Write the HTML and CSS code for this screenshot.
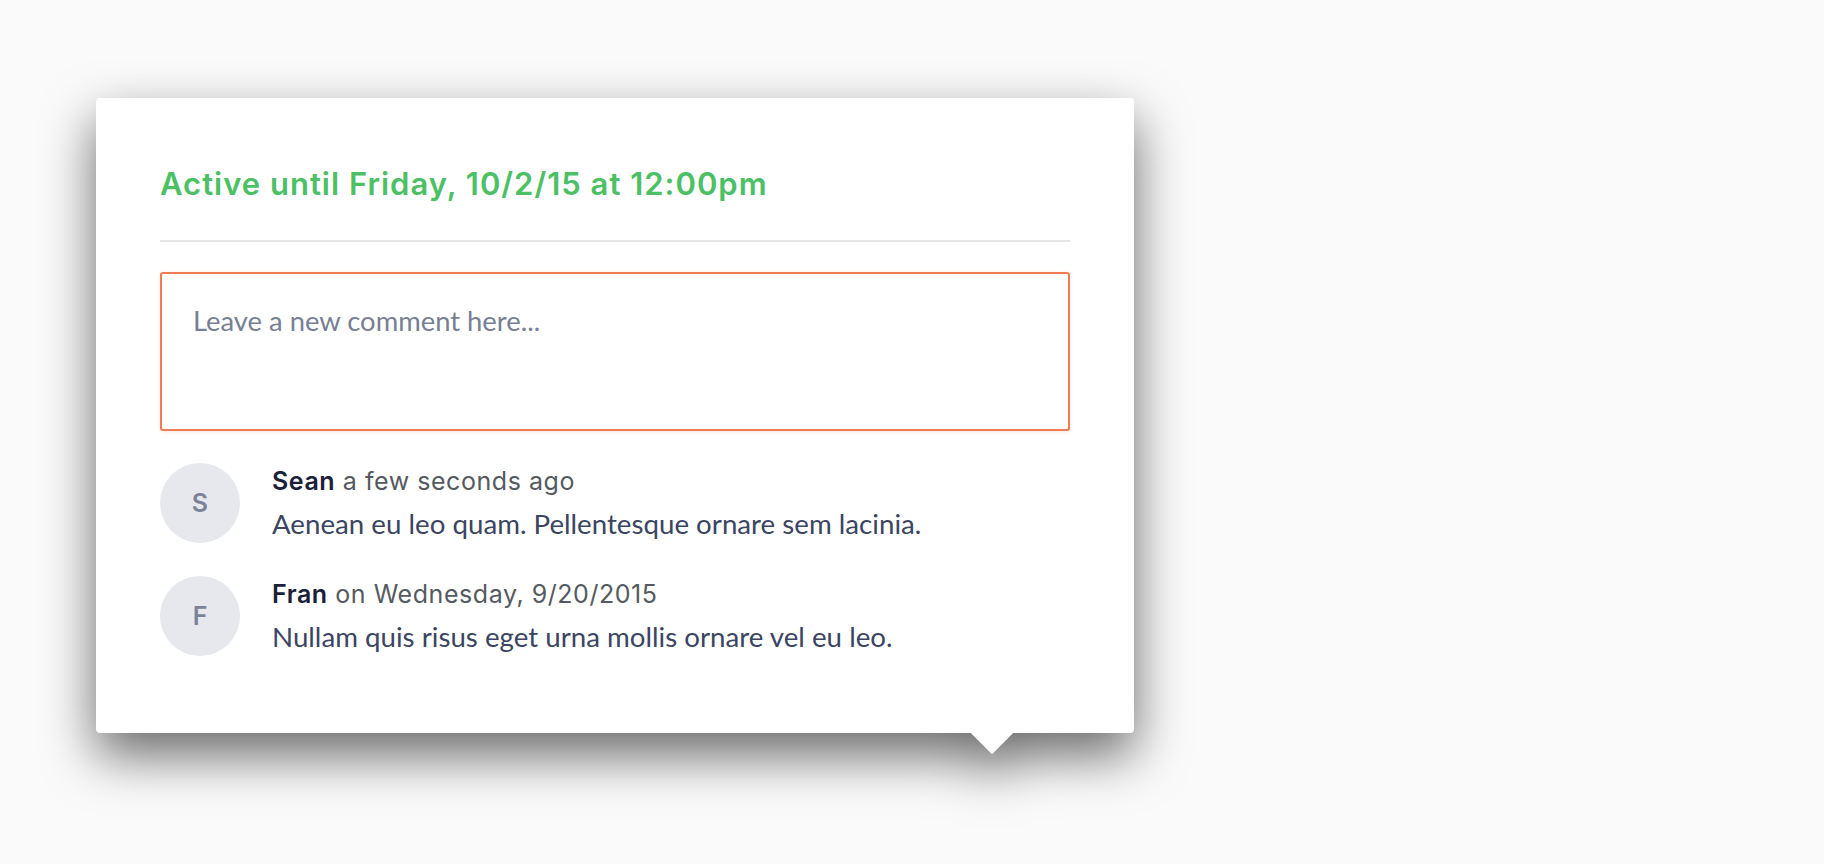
FILE: index.html
```html
<!DOCTYPE html>
<html lang="en">
<head>
<meta charset="utf-8">
<title>Comments popover</title>
<link rel="stylesheet" href="styles.css">
</head>
<body>
<div class="stage">
  <div class="popover">
    <div class="popover-header">
      <h1 class="status">Active until Friday, 10/2/15 at 12:00pm</h1>
    </div>
    <textarea class="comment-input" placeholder="Leave a new comment here..."></textarea>
    <ul class="comments">
      <li class="comment">
        <div class="avatar">S</div>
        <div class="comment-text">
          <div class="meta"><span class="author">Sean</span> <span class="time">a few seconds ago</span></div>
          <p class="body">Aenean eu leo quam. Pellentesque ornare sem lacinia.</p>
        </div>
      </li>
      <li class="comment">
        <div class="avatar">F</div>
        <div class="comment-text">
          <div class="meta"><span class="author">Fran</span> <span class="time">on Wednesday, 9/20/2015</span></div>
          <p class="body">Nullam quis risus eget urna mollis ornare vel eu leo.</p>
        </div>
      </li>
    </ul>
  </div>
</div>
</body>
</html>
```
FILE: styles.css
```css
html, body {
  margin: 0;
  padding: 0;
}
body {
  background: #fafafa;
  font-family: "Lato", "Noto Sans", sans-serif;
  width: 1824px;
  height: 864px;
  overflow: hidden;
}
.stage {
  padding: 98px 0 0 96px;
}
.popover {
  position: relative;
  width: 1038px;
  box-sizing: border-box;
  padding: 66px 64px 77px;
  background: #fff;
  border-radius: 4px;
  filter: drop-shadow(0 22px 26px rgba(0, 0, 0, 0.58));
}
.popover::after {
  content: "";
  position: absolute;
  left: 881px;
  bottom: -15px;
  width: 30px;
  height: 30px;
  background: #fff;
  transform: rotate(45deg);
}
.popover-header {
  padding-bottom: 36px;
  border-bottom: 2px solid #e6e6e6;
}
.status {
  margin: 0;
  font-family: "Inter", "Lato", sans-serif;
  font-weight: 600;
  font-size: 31px;
  line-height: 40px;
  letter-spacing: 1px;
  color: #4cc064;
}
.comment-input {
  display: block;
  margin: 30px 0 0;
  width: 100%;
  height: 159px;
  box-sizing: border-box;
  padding: 31px 31px;
  border: 2px solid #ef7b52;
  border-radius: 3px;
  box-shadow: 0 1px 4px rgba(239, 123, 82, 0.18);
  font-family: "Lato", sans-serif;
  font-size: 27.4px;
  line-height: 32px;
  color: #3b4562;
  resize: none;
  outline: none;
}
.comment-input::placeholder {
  color: #777f94;
  opacity: 1;
}
.comments {
  list-style: none;
  margin: 32px 0 0;
  padding: 0;
  display: flex;
  flex-direction: column;
  gap: 33px;
}
.comment {
  display: flex;
  gap: 32px;
}
.avatar {
  flex: none;
  width: 80px;
  height: 80px;
  border-radius: 50%;
  background: #e6e8ed;
  color: #7a8399;
  font-family: "Inter", "Lato", sans-serif;
  font-weight: 600;
  font-size: 25px;
  display: flex;
  align-items: center;
  justify-content: center;
}
.comment-text {
  padding-top: 3px;
}
.meta {
  font-family: "Inter", "Lato", sans-serif;
  font-size: 25px;
  line-height: 30px;
  letter-spacing: 0.55px;
}
.author {
  font-weight: 600;
  color: #1a2038;
}
.time {
  color: #555a60;
}
.body {
  margin: 13px 0 0;
  font-size: 27.7px;
  line-height: 30px;
  color: #3b4562;
}
```
